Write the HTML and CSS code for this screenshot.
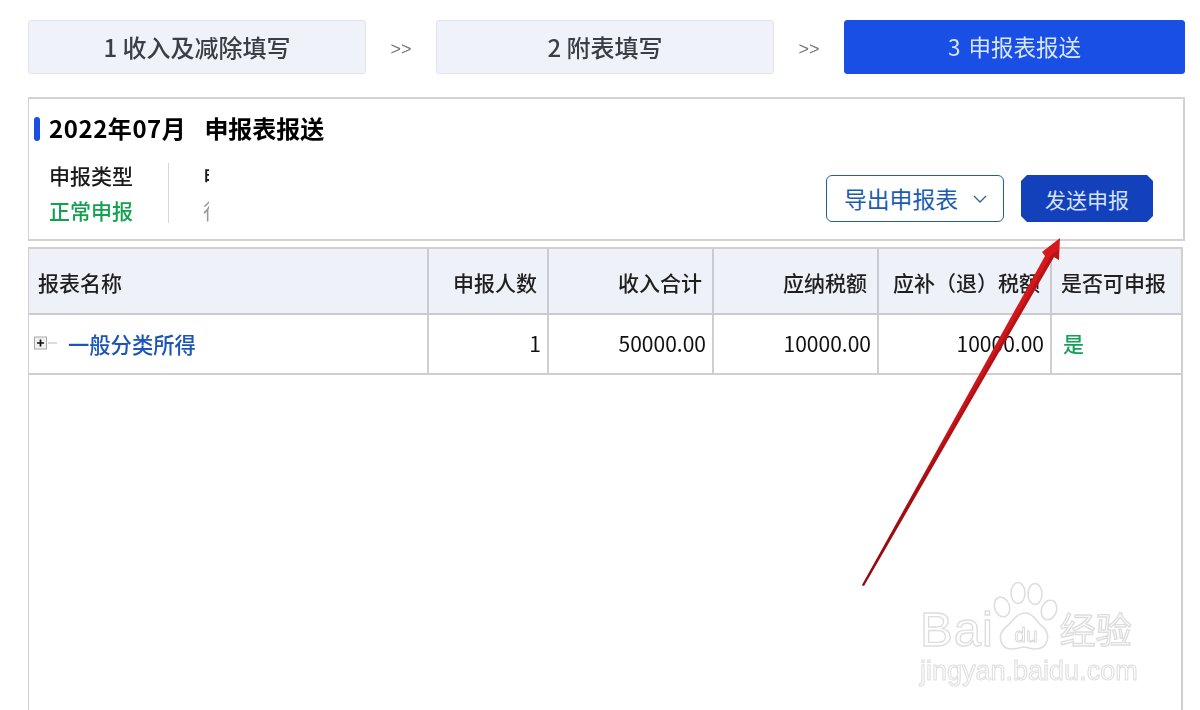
FILE: index.html
```html
<!DOCTYPE html>
<html lang="zh-CN">
<head>
<meta charset="utf-8">
<title>申报表报送</title>
<link rel="stylesheet" href="styles.css">
</head>
<body>
<div class="page">
  <div class="steps">
    <div class="step">1 收入及减除填写</div>
    <div class="sep">&gt;&gt;</div>
    <div class="step">2 附表填写</div>
    <div class="sep">&gt;&gt;</div>
    <div class="step step-active">3 申报表报送</div>
  </div>

  <section class="panel">
    <h1 class="title"><span class="title-date">2022年07月</span><span>申报表报送</span></h1>
    <div class="panel-row">
      <div class="meta">
        <div class="meta-item">
          <div class="meta-label">申报类型</div>
          <div class="meta-value">正常申报</div>
        </div>
        <div class="meta-clip">
          <div class="meta-label">申报状态</div>
          <div class="meta-muted">待申报</div>
        </div>
      </div>
      <div class="actions">
        <button class="btn-outline">导出申报表
          <svg class="chev" width="16" height="10" viewBox="0 0 16 10"><path d="M2 2l6 6 6-6" fill="none" stroke="#2a6496" stroke-width="1.3"/></svg>
        </button>
        <button class="btn-primary">发送申报</button>
      </div>
    </div>
  </section>

  <div class="table-box">
    <table class="grid">
      <colgroup>
        <col class="c1"><col class="c2"><col class="c3"><col class="c3"><col class="c5"><col class="c6">
      </colgroup>
      <thead>
        <tr>
          <th>报表名称</th>
          <th class="num">申报人数</th>
          <th class="num">收入合计</th>
          <th class="num">应纳税额</th>
          <th class="num">应补（退）税额</th>
          <th>是否可申报</th>
        </tr>
      </thead>
      <tbody>
        <tr>
          <td><span class="tree">
            <svg width="25" height="14" viewBox="0 0 25 14"><rect x="1.500" y="1" width="12" height="12" fill="#f2f2f2" stroke="#a8a8a8"/><path d="M4 7h7M7.500 3.500v7" stroke="#111" stroke-width="1.7"/><path d="M15 7h9" stroke="#bbb"/></svg>
            <a class="link">一般分类所得</a></span></td>
          <td class="val">1</td>
          <td class="val">50000.00</td>
          <td class="val">10000.00</td>
          <td class="val">10000.00</td>
          <td class="yes">是</td>
        </tr>
      </tbody>
    </table>
  </div>

  <svg class="arrow" width="1200" height="710" viewBox="0 0 1200 710">
    <defs>
      <linearGradient id="ag" x1="862" y1="585" x2="1060" y2="238" gradientUnits="userSpaceOnUse">
        <stop offset="0" stop-color="#8f0d10"/><stop offset=".45" stop-color="#c8141a"/><stop offset="1" stop-color="#d9181c"/>
      </linearGradient>
    </defs>
    <polygon points="862,585 1045,256 1042,252 1060,238 1059,260 1054,257 864,586" fill="url(#ag)"/>
    <polygon points="863,586 1054,257 1059,260 1059,250 1052,254 862,585" fill="#8c0c10" opacity=".4"/>
  </svg>

  <div class="mark">
    <div class="mark-top">
      <span class="mark-bai">Bai</span>
      <svg class="paw" width="70" height="72" viewBox="0 0 70 72">
        <g fill="#fff" stroke="#dedede" stroke-width="1.6">
          <ellipse cx="11" cy="25" rx="7.500" ry="10" transform="rotate(-20 11 25)"/>
          <ellipse cx="27" cy="11" rx="7" ry="10.500"/>
          <ellipse cx="44" cy="12" rx="7" ry="10.500"/>
          <ellipse cx="58" cy="28" rx="7.500" ry="10" transform="rotate(20 58 28)"/>
          <path d="M34 31c9 0 11 9 18 14 8 6 6 22-8 22-5 0-7-2-11-2s-7 2-12 2c-13 0-15-15-6-22 7-5 10-14 19-14z"/>
        </g>
        <text class="paw-du" x="35" y="60" text-anchor="middle">du</text>
      </svg>
      <span class="mark-cn">经验</span>
    </div>
    <div class="mark-url">jingyan.baidu.com</div>
  </div>
</div>
</body>
</html>
```
FILE: styles.css
```css
* { box-sizing: border-box; }
html, body { margin: 0; height: 100%; background: #fff; }
body { overflow: hidden; font-family: "Noto Sans CJK SC", "Liberation Sans", sans-serif; color: #1c1c1c; }
.page { position: relative; width: 1200px; height: 710px; padding: 20px 15px 0 28px; overflow: hidden; filter: blur(.35px); }

.steps { display: flex; align-items: stretch; height: 54px; }
.step { width: 338px; flex: none; display: flex; align-items: center; justify-content: center; padding-bottom: 2px; background: #eff2f8; border: 1px solid #e0e3ea; border-radius: 3px; font-size: 24px; font-weight: 500; color: #3a3f47; }
.sep { width: 70px; flex: none; text-align: center; line-height: 59px; font-size: 18px; color: #777; font-family: "Liberation Sans", sans-serif; }
.step-active { width: 341px; background: #1a4fe6; border-color: #1a4fe6; color: #d9e6ff; font-size: 22.5px; font-weight: 400; word-spacing: 3px; }

.panel { margin-top: 23px; height: 144px; border: solid #d2d2d2; border-width: 2px 2px 2px 1px; padding: 11px 0 0 5px; }
.title { margin: 0; display: flex; gap: 18px; font-size: 24px; line-height: 36px; font-weight: 700; color: #000; padding-left: 15px; position: relative; }
.title-date { letter-spacing: .55px; }
.title::before { content: ""; position: absolute; left: 0; top: 7px; width: 6px; height: 24px; border-radius: 3px; background: #1a4fe0; }
.panel-row { display: flex; justify-content: space-between; margin-top: 17px; }
.meta { display: flex; padding-left: 15px; height: 60px; }
.meta-item { width: 120px; border-right: 1px solid #d8d8d8; }
.meta-label { color: #1a1a1a; font-size: 21px; font-weight: 500; line-height: 24px; white-space: nowrap; }
.meta-value { color: #12a150; font-size: 21px; font-weight: 500; line-height: 30px; margin-top: 8px; white-space: nowrap; }
.meta-muted { color: #999; font-size: 21px; line-height: 30px; margin-top: 8px; white-space: nowrap; }
.meta-clip { width: 40px; padding-left: 34px; overflow: hidden; }
.actions { display: flex; gap: 17px; align-self: flex-start; margin: 12px 30px 0 0; }
.btn-outline, .btn-primary { height: 47px; font-family: inherit; display: flex; align-items: center; justify-content: center; }
.btn-outline { width: 178px; gap: 14px; padding: 0 0 0 2px; background: #fff; border: 1.5px solid #24608f; border-radius: 6px; color: #1c5cb0; font-size: 22.8px; }
.btn-primary { width: 132px; padding: 0; background: #1340bb; border: 0; color: #d6e2f8; font-size: 21px; clip-path: polygon(6px 0, calc(100% - 6px) 0, 100% 6px, 100% calc(100% - 6px), calc(100% - 6px) 100%, 6px 100%, 0 calc(100% - 6px), 0 6px); }

.table-box { margin-top: 6px; width: 1155px; height: 470px; border: solid #d0d0d0; border-width: 2px 2px 0 1px; }
.grid { width: 100%; border-collapse: collapse; table-layout: fixed; }
.c1 { width: 399px; }
.c2 { width: 120px; }
.c3 { width: 165px; }
.c5 { width: 173px; }
.grid th { height: 65px; background: #eef1f7; font-size: 21px; font-weight: 500; text-align: left; padding: 2px 9px 0; color: #1f1f1f; border: solid #c9cbd2; border-width: 0 2px 2px 0; white-space: nowrap; }
.grid th.num { text-align: right; padding-right: 10px; }
.grid th:last-child, .grid td:last-child { border-right: 0; }
.grid td { height: 60px; font-size: 21px; font-weight: 500; padding: 0 6px 2px 7px; border: solid #cfcfcf; border-width: 0 2px 2px 0; }
.grid .val { text-align: right; color: #111; font-weight: 400; }
.grid .yes { color: #14a05a; padding-left: 11px; }
.tree { display: flex; align-items: center; gap: 10px; }
.tree svg { flex: none; margin-left: -3px; }
.link { color: #1a55b8; font-size: 21.3px; }

.arrow { position: absolute; left: 0; top: 0; pointer-events: none; }

.mark { position: absolute; left: 920px; top: 582px; width: 220px; color: transparent; }
.mark-top { display: flex; align-items: flex-end; height: 72px; }
.mark-bai { font-family: "Liberation Sans", sans-serif; font-size: 49px; line-height: 58px; margin-bottom: -4px; letter-spacing: 1px; -webkit-text-stroke: 1.4px #dedede; }
.paw { flex: none; margin: 0 -1px 0 -3px; }
.paw-du { font-family: "Liberation Sans", sans-serif; font-size: 21px; fill: #fff; stroke: #d8d8d8; stroke-width: .9px; }
.mark-cn { font-size: 36px; line-height: 52px; -webkit-text-stroke: 1.4px #dedede; white-space: nowrap; }
.mark-url { font-family: "Liberation Sans", sans-serif; font-size: 27px; line-height: 34px; -webkit-text-stroke: 1.1px #e0e0e0; white-space: nowrap; }
```
